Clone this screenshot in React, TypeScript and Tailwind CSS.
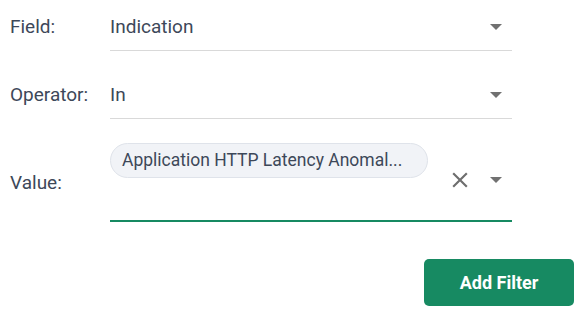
const ArrowDown = () => (
  <svg width="12" height="6" viewBox="0 0 12 6" className="shrink-0">
    <path d="M0 0h12L6 6z" fill="#717171" />
  </svg>
);

const CloseIcon = () => (
  <svg width="26" height="26" viewBox="0 0 24 24" className="shrink-0">
    <path
      d="M19 6.41 17.59 5 12 10.59 6.41 5 5 6.41 10.59 12 5 17.59 6.41 19 12 13.41 17.59 19 19 17.59 13.41 12z"
      fill="#6e6e6e"
    />
  </svg>
);

const SelectRow = ({ label, value }: { label: string; value: string }) => (
  <div className="flex">
    <div className="w-[100px] pt-[15px] leading-6">{label}</div>
    <div className="w-[402px] flex items-center pt-[15px] pb-[11px] border-b border-[#d9d9d9]">
      <span className="flex-1 leading-6">{value}</span>
      <span className="mr-[10px]">
        <ArrowDown />
      </span>
    </div>
  </div>
);

export default function App() {
  return (
    <div
      className="w-[576px] h-[312px] bg-white pl-[10px] text-[19px] text-[#3d4859]"
      style={{ fontFamily: "Roboto, 'Noto Sans', sans-serif" }}
    >
      <SelectRow label="Field:" value="Indication" />
      <div className="mt-[17px]">
        <SelectRow label="Operator:" value="In" />
      </div>

      {/* Value (multi select) */}
      <div className="flex mt-[24px]">
        <div className="w-[100px] pt-[28px] leading-6">Value:</div>
        <div className="w-[402px] flex items-start h-[79px] border-b-2 border-[#168a62]">
          <div className="flex-1">
            <div className="w-[318px] h-[35px] rounded-full bg-[#f1f3f7] border border-[#dfe3ea] flex items-center pl-[11px] text-[17.5px] whitespace-nowrap">
              Application HTTP Latency Anomal...
            </div>
          </div>
          <div className="flex items-center pt-[24px] mr-[10px]">
            <CloseIcon />
            <span className="ml-[17px]">
              <ArrowDown />
            </span>
          </div>
        </div>
      </div>

      <div className="flex justify-end pr-[2px] mt-[37px]">
        <button className="w-[150px] h-[47px] rounded-[5px] bg-[#178a62] text-white text-[18px] font-bold">
          Add Filter
        </button>
      </div>
    </div>
  );
}
